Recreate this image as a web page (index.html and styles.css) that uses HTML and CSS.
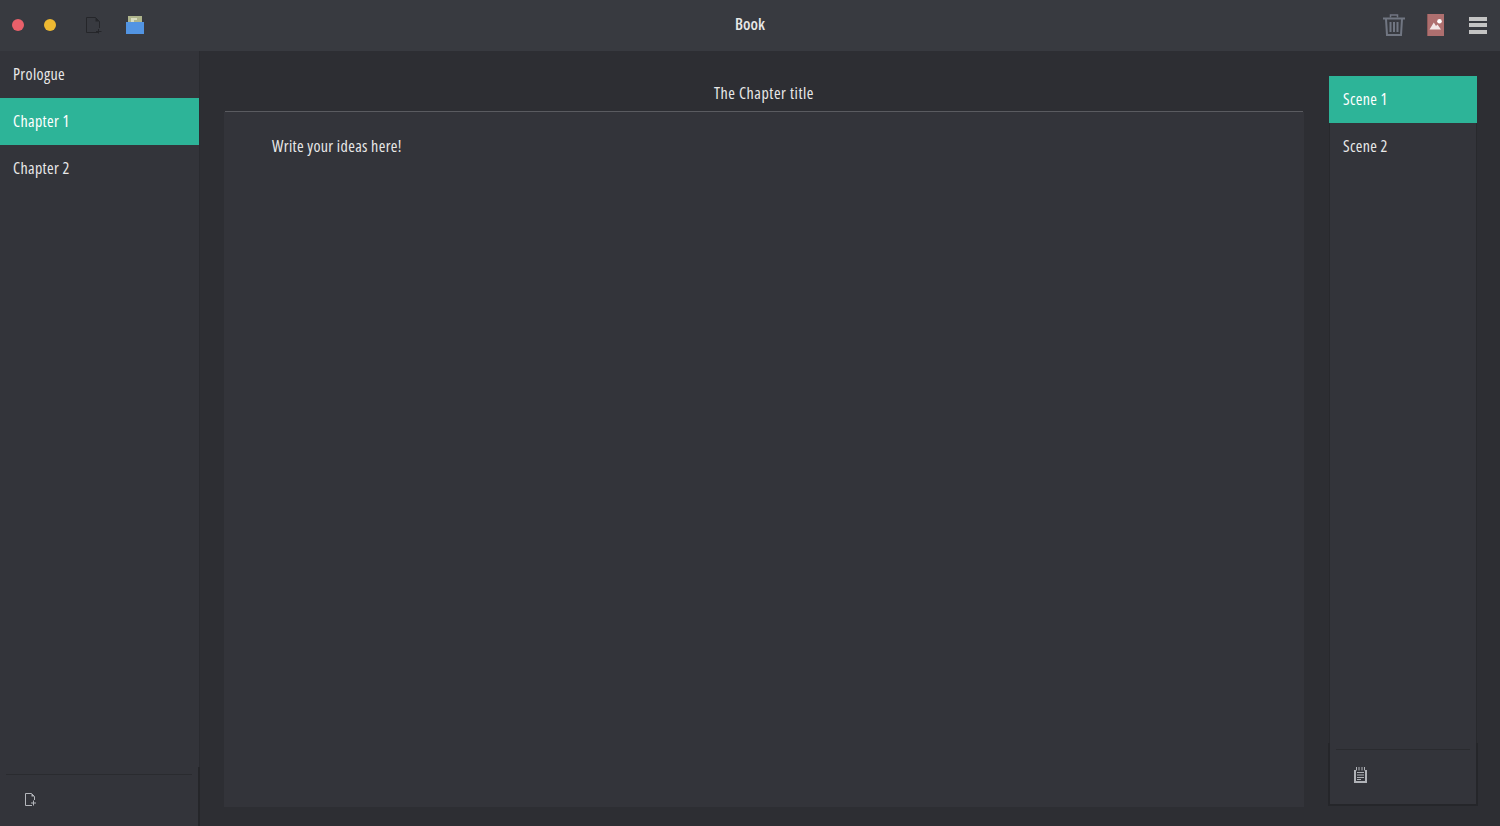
FILE: index.html
```html
<!DOCTYPE html>
<html>
<head>
    <link rel="stylesheet" href="styles.css">
    <title>Book</title>
</head>
<body>
    <div class="header">
        <div class="header-left">
            <span class="dot dot-red"></span>
            <span class="dot dot-yellow"></span>
            <svg class="icon-new" width="16" height="17" viewBox="0 0 16 17">
                <path d="M12.500 15.500H.5V.5H9.500L13.500 4.500V11" fill="none" stroke="#25262a"/>
                <path d="M9.500.5L13.500 4.500H9.500Z" fill="#25262a"/>
                <path d="M10 14.500H15.500M12.500 12V16.500" fill="none" stroke="#25262a"/>
            </svg>
            <svg class="icon-folder" width="18" height="18" viewBox="0 0 18 18">
                <rect x="2" y="0" width="14" height="8" fill="#aeb48c"/>
                <path d="M5 2H8V6H5Z" fill="#d8dcc0"/>
                <path d="M8 2H11V4H8Z" fill="#d8dcc0"/>
                <path d="M0 6H9L10 6H18V18H0Z" fill="#5294e2"/>
            </svg>
        </div>
        <div class="header-title">Book</div>
        <div class="header-right">
            <svg width="22" height="22" viewBox="0 0 22 22">
                <path d="M0 4.500H22" stroke="#717682" stroke-width="2" fill="none"/>
                <path d="M7.500 3.500V1H14.500V3.500" stroke="#717682" stroke-width="1.500" fill="none"/>
                <path d="M3 5L4 21H18L19 5" stroke="#717682" stroke-width="2" fill="none"/>
                <path d="M7.500 8V18M11 8V18M14.500 8V18" stroke="#717682" stroke-width="2" fill="none"/>
            </svg>
            <svg width="17" height="22" viewBox="0 0 17 22">
                <rect width="17" height="22" fill="#ae6f6f"/>
                <rect width="1" height="22" fill="#8f5a5a"/>
                <circle cx="12.500" cy="7.300" r="2.300" fill="#fff"/>
                <path d="M2.500 15.500L6.800 8.500L9 12L10.500 10.500L14 15.500Z" fill="#f2e6e6"/>
            </svg>
            <div class="menu-icon">
                <span></span><span></span><span></span>
            </div>
        </div>
    </div>

    <div class="main">
        <div class="sidebar">
            <div class="list">
                <div class="list-item">Prologue</div>
                <div class="list-item active">Chapter 1</div>
                <div class="list-item">Chapter 2</div>
            </div>
            <div class="panel-footer sidebar-footer">
                <div class="footer-inner">
                    <svg width="11" height="13" viewBox="0 0 11 13">
                        <path d="M7 12.500H.5V.5H6.500L9.500 3.500V7" fill="none" stroke="#b4b6bb"/>
                        <path d="M6.500.5L9.500 3.500H6.500Z" fill="#b4b6bb"/>
                        <path d="M6 10H11M8.500 7.500V12.500" fill="none" stroke="#b4b6bb"/>
                    </svg>
                </div>
            </div>
        </div>

        <div class="content">
            <div class="editor">
                <div class="chapter-title">The Chapter title</div>
                <div class="chapter-text">Write your ideas here!</div>
            </div>
        </div>

        <div class="scenes">
            <div class="scenes-box">
                <div class="list scene-list">
                    <div class="list-item active">Scene 1</div>
                    <div class="list-item">Scene 2</div>
                </div>
                <div class="panel-footer scenes-footer">
                    <div class="footer-inner">
                        <svg width="13" height="16" viewBox="0 0 13 16">
                            <path d="M0 3H13V16H0Z" fill="#b0b2b7"/>
                            <path d="M2 3H11V14H2Z" fill="#33343a"/>
                            <path d="M2.500 0V3.500M5 0V3.500M8 0V3.500M10.500 0V3.500" stroke="#b0b2b7" fill="none"/>
                            <path d="M3 5.500H10M3 8H10M3 10.500H10M3 12.500H7" stroke="#b0b2b7" fill="none"/>
                        </svg>
                    </div>
                </div>
            </div>
        </div>
    </div>
</body>
</html>
```

FILE: styles.css
```css
* {
    box-sizing: border-box;
}
html, body {
    height: 100%;
}
body {
    margin: 0;
    display: flex;
    flex-direction: column;
    overflow: hidden;
    background-color: #2d2e33;
    color: #e8e8e8;
    font-family: "Open Sans", sans-serif;
    font-stretch: 75%;
    font-size: 16px;
    letter-spacing: 0.35px;
}
.header {
    display: flex;
    align-items: center;
    justify-content: space-between;
    flex: 0 0 51px;
    position: relative;
    padding-bottom: 1px;
    background-color: #383a40;
}
.header-left {
    display: flex;
    align-items: center;
    padding-left: 12px;
}
.dot {
    width: 12px;
    height: 12px;
    margin-right: 20px;
    border-radius: 50%;
}
.dot-red {
    background-color: #e9606a;
}
.dot-yellow {
    background-color: #eeb932;
    margin-right: 30px;
}
.icon-new {
    margin-right: 24px;
}
.header-title {
    position: absolute;
    left: 0;
    right: 0;
    top: 13px;
    text-align: center;
    font-weight: 600;
    font-size: 16px;
    line-height: 22px;
    letter-spacing: 0;
}
.header-right {
    display: flex;
    align-items: center;
    gap: 22px;
    padding-right: 13px;
}
.menu-icon {
    display: flex;
    flex-direction: column;
    gap: 2.5px;
    width: 18px;
    margin-left: 3px;
}
.menu-icon span {
    height: 4px;
    background-color: #c4c4c4;
}
.main {
    display: flex;
    flex: 1;
    min-height: 0;
}
.sidebar {
    display: flex;
    flex-direction: column;
    width: 200px;
    background-color: #33343a;
    border-right: 1px solid #2a2b30;
}
.list {
    flex: 1;
}
.list-item {
    height: 47px;
    line-height: 47px;
    padding-left: 13px;
}
.list-item.active {
    background-color: #2db498;
    color: #fff;
}
.panel-footer {
    padding: 0 6px;
}
.footer-inner {
    height: 100%;
    border-top: 1px solid #2a2b2f;
}
.sidebar-footer {
    flex: 0 0 59px;
    margin-right: -1px;
    padding-top: 7px;
    border-right: 2px solid #25262a;
}
.sidebar-footer .footer-inner {
    padding: 14px 0 0 19px;
}
.content {
    flex: 1;
    padding: 0 0 19px 24px;
}
.editor {
    height: 100%;
    background: linear-gradient(#2d2e33 61px, #33343a 61px);
}
.chapter-title {
    height: 61px;
    padding-top: 31px;
    line-height: 22px;
    text-align: center;
    letter-spacing: 0.55px;
    border-bottom: 1px solid #5a5b60;
    margin: 0 1px;
}
.chapter-text {
    padding: 22px 48px;
    line-height: 24px;
}
.scenes {
    flex: 0 0 196px;
    padding: 25px 23px 20px 25px;
}
.scenes-box {
    display: flex;
    flex-direction: column;
    height: 100%;
    background-color: #33343a;
    border: 1px solid #28292d;
    border-top: 0;
}
.scene-list .list-item {
    padding-left: 14px;
    margin: 0 -1px;
}
.scenes-footer {
    flex: 0 0 63px;
    padding-top: 6px;
    margin: 0 -2px -1px;
    border: 2px solid #25262a;
    border-top: 0;
}
.scenes-footer .footer-inner {
    padding: 16px 0 0 18px;
}
```
